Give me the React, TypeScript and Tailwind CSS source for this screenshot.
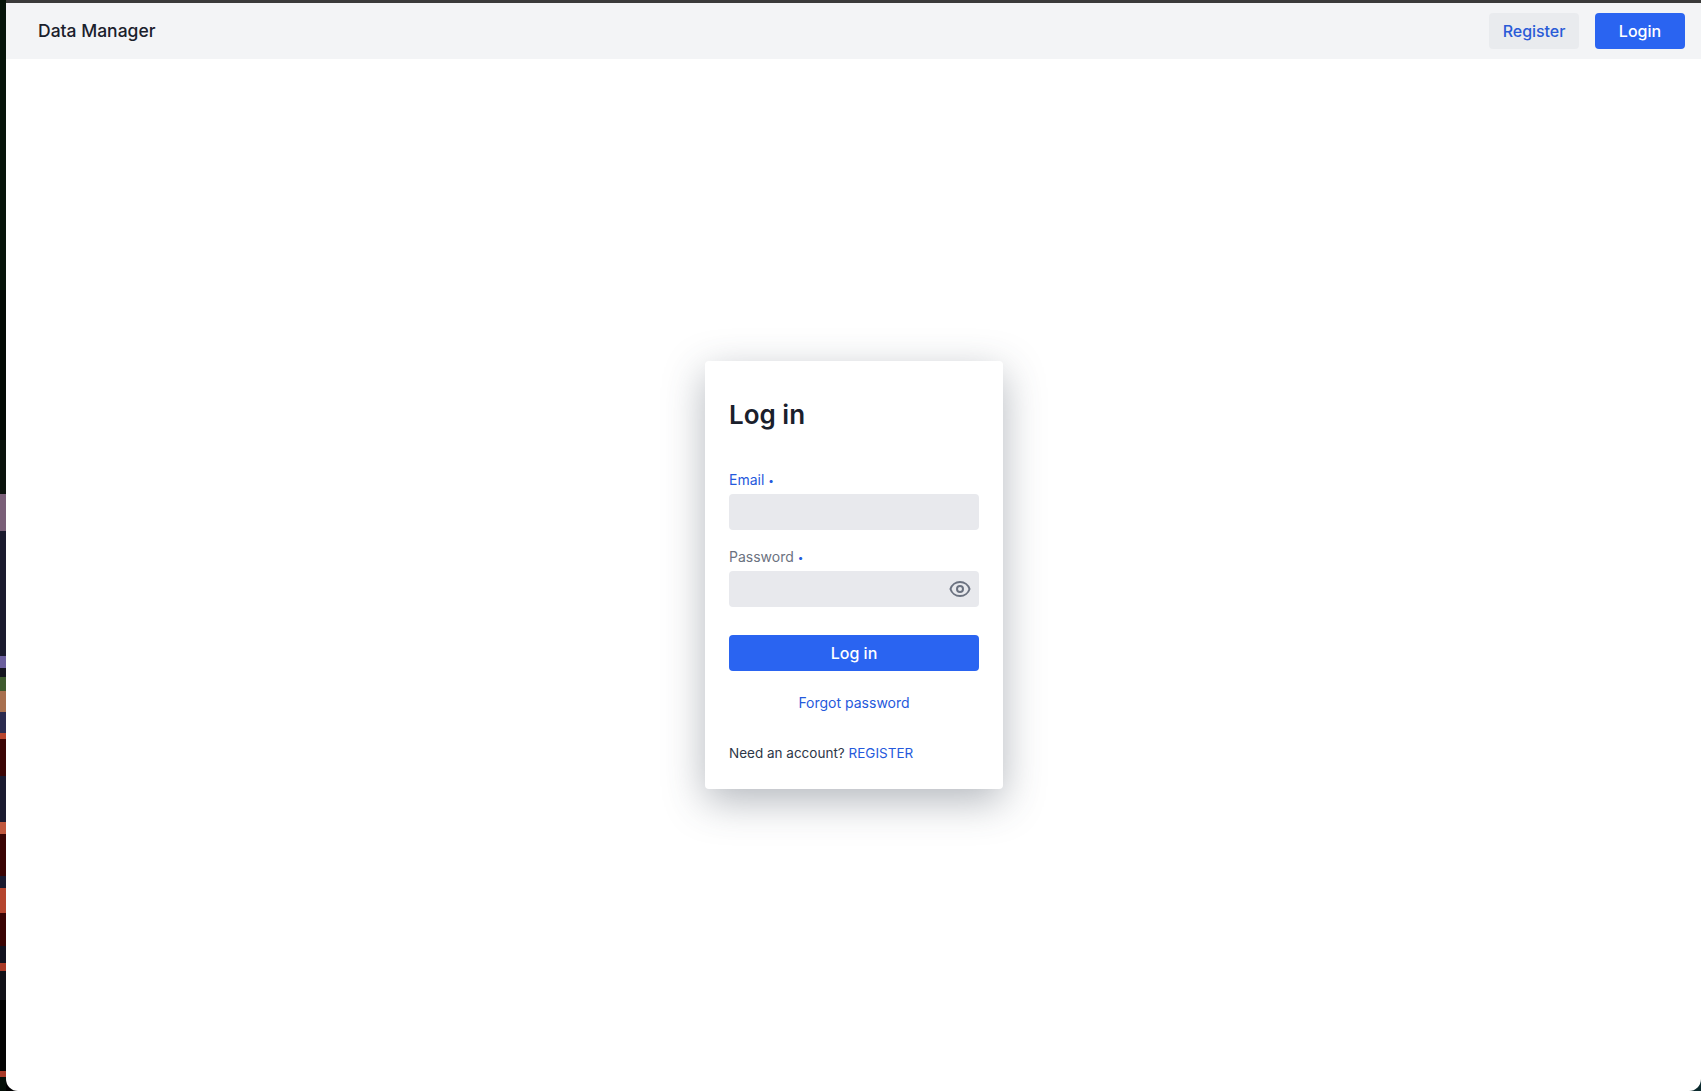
import { HiOutlineEye } from "react-icons/hi";

// the bit of desktop wallpaper left of the window: [y, height, colour]
const WALLPAPER: [number, number, string][] = [
  [0, 290, "#06140a"],
  [290, 150, "#030a05"],
  [440, 54, "#0a120c"],
  [494, 37, "#7a5f78"],
  [531, 125, "#1a1a2e"],
  [656, 12, "#6b5f9e"],
  [668, 9, "#14141f"],
  [677, 14, "#3e5a2e"],
  [691, 21, "#a8704f"],
  [712, 21, "#2b2b4f"],
  [733, 6, "#b8452e"],
  [739, 37, "#3b0505"],
  [776, 46, "#1a1a30"],
  [822, 12, "#c0583e"],
  [834, 42, "#3a0404"],
  [876, 12, "#1a1a30"],
  [888, 25, "#b5452f"],
  [913, 33, "#3a0404"],
  [946, 17, "#12121f"],
  [963, 8, "#a83a28"],
  [971, 29, "#111118"],
  [1000, 71, "#030303"],
  [1071, 6, "#a83a28"],
  [1077, 14, "#050f08"],
];

function Field({ label, active, eye }: { label: string; active?: boolean; eye?: boolean }) {
  return (
    <div>
      <label className={`mb-1 block text-sm leading-5 ${active ? "text-[#2559dc]" : "text-[#6b7280]"}`}>
        {label}
        <span className="ml-1 align-[1px] text-[10px] text-[#2559dc]">•</span>
      </label>
      <div className="relative">
        <div className="h-9 w-full rounded bg-[#e8e9ed]" />
        {eye && <HiOutlineEye className="absolute right-[7px] top-[6px] h-6 w-6 text-[#6b7280]" />}
      </div>
    </div>
  );
}

export default function App() {
  return (
    <div className="flex h-[1091px] w-[1701px] overflow-hidden bg-linear-to-r from-black to-[#0b2a2e] font-['Inter',sans-serif]">
      <svg width="6" height="1091" className="shrink-0">
        {WALLPAPER.map(([y, h, c]) => (
          <rect key={y} x="0" y={y} width="6" height={h} fill={c} />
        ))}
      </svg>
      <div className="flex min-w-0 flex-1 flex-col overflow-hidden rounded-b-xl bg-white">
        <div className="h-[3px] bg-[#3a3a3a]" />
        <nav className="flex h-14 items-center justify-between bg-[#f3f4f6] pl-8 pr-4">
          <span className="text-[17.5px] font-medium text-[#1a202c]">Data Manager</span>
          <div className="flex gap-4">
            <button className="h-9 w-[90px] rounded bg-[#e9ebee] font-medium tracking-[-0.05px] text-[#2a5bd7]">Register</button>
            <button className="h-9 w-[90px] rounded bg-[#2a64f1] font-medium text-white">Login</button>
          </div>
        </nav>
        <main className="flex flex-1 justify-center pl-[1px] pt-[302px]">
          <div className="h-[428px] w-[298px] rounded bg-white p-6 shadow-[0_12px_40px_rgba(55,65,81,0.38)]">
            <h1 className="mt-3.5 text-[26px] leading-8 font-semibold text-[#1a202c]">Log in</h1>
            <div className="mt-[39px] flex flex-col gap-[17px]">
              <Field label="Email" active />
              <Field label="Password" eye />
            </div>
            <button className="mt-7 h-9 w-full rounded bg-[#2a64f1] font-medium text-white">Log in</button>
            <div className="mt-[22px] text-center text-sm leading-5 text-[#2559dc]">Forgot password</div>
            <p className="mt-[30px] text-[13.5px] leading-5 text-[#2d3748]">
              Need an account? <span className="text-[#2559dc]">REGISTER</span>
            </p>
          </div>
        </main>
      </div>
    </div>
  );
}
